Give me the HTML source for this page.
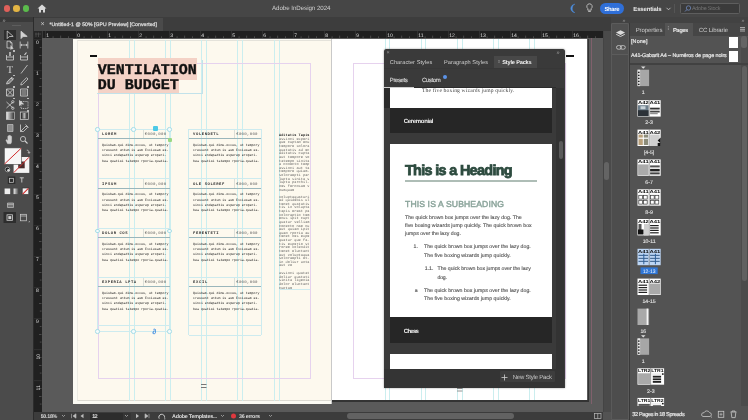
<!DOCTYPE html>
<html><head><meta charset="utf-8">
<style>
*{margin:0;padding:0;box-sizing:border-box}
html,body{width:748px;height:420px;overflow:hidden;background:#535353;font-family:"Liberation Sans",sans-serif;position:relative;text-rendering:geometricPrecision;-webkit-font-smoothing:antialiased}
.a{position:absolute}
.t{position:absolute;white-space:nowrap;line-height:1}
.m{font-family:"Liberation Mono",monospace}
svg{position:absolute;overflow:visible}
</style></head><body><div style="position:absolute;left:0;top:0;width:748px;height:420px;overflow:hidden;will-change:transform">
<div class="a" style="left:0px;top:0px;width:748px;height:17px;background:#464646"></div>
<div class="a" style="left:3.6px;top:5.2px;width:6.6px;height:6.6px;border-radius:50%;background:#e0605a"></div>
<div class="a" style="left:13px;top:5.2px;width:6.6px;height:6.6px;border-radius:50%;background:#e3b544"></div>
<div class="a" style="left:22.5px;top:5.2px;width:6.6px;height:6.6px;border-radius:50%;background:#5bbb4c"></div>
<svg style="left:37px;top:4px" width="10" height="9" viewBox="0 0 10 9"><path d="M5 0.5 L0.5 4.5 H2 V8.5 H4 V6 H6 V8.5 H8 V4.5 H9.5 Z" fill="#d8d8d8"/></svg>
<div class="t" style="left:272px;top:6px;font-size:6.2px;color:#cdcdcd;letter-spacing:-0.058px;">Adobe InDesign 2024</div>
<svg style="left:569px;top:3px" width="8" height="11" viewBox="0 0 8 11"><path d="M5.8 1.2 C2.6 2.2 2.2 8.2 5.8 9.6 C3.6 9.4 1.8 7.6 1.8 5.4 C1.8 3.2 3.6 1.4 5.8 1.2 Z" fill="#4d8fe0" stroke="#4d8fe0" stroke-width="0.5"/></svg>
<svg style="left:586px;top:3px" width="7" height="10" viewBox="0 0 7 10"><path d="M3.5 0.8 A2.7 2.7 0 0 0 1.8 5.6 V7.2 H5.2 V5.6 A2.7 2.7 0 0 0 3.5 0.8 Z M2.2 8.5 H4.8" fill="none" stroke="#cfcfcf" stroke-width="0.8"/></svg>
<div class="a" style="left:600px;top:3px;width:24px;height:11px;border-radius:6px;background:#2f6fd8"></div>
<div class="t" style="left:604.4px;top:8px;font-size:5.9px;color:#ffffff;font-weight:bold;letter-spacing:-0.324px;">Share</div>
<div class="t" style="left:633.3px;top:7px;font-size:6.0px;color:#e8e8e8;font-weight:bold;letter-spacing:-0.154px;">Essentials</div>
<svg style="left:666px;top:7px" width="5" height="4" viewBox="0 0 5 4"><path d="M0.5 0.8 L2.5 2.8 L4.5 0.8" fill="none" stroke="#cfcfcf" stroke-width="0.8"/></svg>
<div class="a" style="left:674px;top:4px;width:1px;height:9px;background:#555"></div>
<div class="a" style="left:680px;top:3px;width:60.3px;height:10.6px;background:#3b3b3b;border:0.9px solid #5e5e5e;border-radius:1.5px"></div>
<svg style="left:684px;top:5px" width="8" height="7" viewBox="0 0 8 7"><circle cx="4.5" cy="3" r="2.2" fill="none" stroke="#6f86b8" stroke-width="0.8"/><path d="M3 4.5 L1 6.5" stroke="#6f86b8" stroke-width="0.9"/></svg>
<div class="t" style="left:691.9px;top:7px;font-size:5.4px;color:#767676;letter-spacing:-0.202px;">Adobe Stock</div>
<div class="a" style="left:603px;top:17px;width:145px;height:6px;background:#3a3a3a"></div>
<div class="a" style="left:0px;top:17px;width:34px;height:403px;background:#4b4b4b"></div>
<div class="a" style="left:0px;top:17px;width:34px;height:5px;background:#3a3a3a"></div>
<div class="a" style="left:33px;top:17px;width:1px;height:403px;background:#2c2c2c"></div>
<div class="t" style="left:2.6px;top:19px;font-size:5.5px;color:#a0a0a0;">»</div>
<div class="a" style="left:12px;top:24.5px;width:9px;height:1px;background:#5e5e5e"></div>
<div class="a" style="left:3.5px;top:30px;width:12px;height:9.5px;background:#2e2e2e"></div>
<svg style="left:0;top:0" width="34" height="230" viewBox="0 0 34 230">
<g fill="none" stroke="#d2d2d2" stroke-width="0.8" stroke-linejoin="round">
<path d="M7.2 31 L7.2 38.6 L9.2 36.6 L13.2 36.4 Z"/>
<path d="M21 31.2 L21 38.6 L23 36.6 L27.2 36.4 Z" fill="#d2d2d2"/>
<path d="M7 41.2 H10.3 L12 42.9 V48 H7 Z M10.3 41.2 V42.9 H12"/><path d="M10.8 45.6 V49.6 L11.7 48.7 L13.2 48.7 Z" fill="#d2d2d2" stroke-width="0.5"/>
<path d="M20.2 41.5 V48.5 M27.8 41.5 V48.5 M20.8 45 H27.2 M22 44 L20.8 45 L22 46 M26 44 L27.2 45 L26 46"/>
<path d="M6.5 55 V60 H13.5 V55 M6.5 57 H13.5" /><path d="M10 52 V56" stroke-width="1.4"/>
<path d="M20.5 55 V60 H27.5 V55 M20.5 57 H27.5"/><path d="M24.5 55 L26.5 52.5" stroke-width="1.2"/>
<path d="M21 73.5 L27.5 65"/>
<path d="M6.5 84 L7.3 81.6 L11.8 77.2 L13.6 79 L9.1 83.4 Z M11 78 L12.8 79.8" fill="#d2d2d2" fill-opacity="0.4"/>
<path d="M20.8 85 L21.3 83 L26.6 77.6 L28 79 L22.7 84.4 Z"/>
<path d="M6.5 89 H13.5 V96 H6.5 Z M6.5 89 L13.5 96 M13.5 89 L6.5 96"/>
<path d="M20.5 89 H27.5 V96 H20.5 Z"/>
<path d="M6.5 102 L13 108 M6.5 108 L13 102"/><circle cx="12.8" cy="101.8" r="1.2"/><circle cx="12.8" cy="108.2" r="1.2"/>
<path d="M21 101.5 H28 V108.5 H21 Z" stroke-dasharray="1 0.8"/><path d="M19.5 100.5 L19.5 105.5 L21 104 L23.5 104 Z" fill="#d2d2d2"/>
<path d="M20.5 124.5 V131.5"/>
<path d="M20.5 131.5 L22 130 L26 126 L27.5 127.5 L23.5 131.5 Z M25.5 124.5 L28.5 127.5"/>
<path d="M7.6 143.8 L6 140.6 C5.6 139.8 6.5 139.3 7.1 140 L7.8 140.8 V136.4 C7.8 135.8 8.7 135.8 8.7 136.4 V139 V135.6 C8.7 135 9.7 135 9.7 135.6 V139 V135.9 C9.7 135.3 10.7 135.3 10.7 135.9 V139 V136.6 C10.7 136 11.6 136 11.6 136.6 V141 C11.6 142.5 11.2 143.2 10.8 143.8 Z" fill="#d2d2d2" stroke-width="0.4"/>
<circle cx="23" cy="139" r="2.6"/><path d="M25 141 L27.5 143.5" stroke-width="1.1"/>
<path d="M26.8 150.2 C28.5 150.2 29 151 29 153 M28 152.2 L29 153.4 L30 152.2"/>
</g>
<text x="6.8" y="73.2" font-family="Liberation Serif" font-size="10.5" fill="#d2d2d2">T</text>
<rect x="6.3" y="112" width="8" height="7.5" fill="url(#gr1)" stroke="#d2d2d2" stroke-width="0.6"/>
<rect x="20.3" y="112" width="8" height="7.5" fill="none" stroke="#d2d2d2" stroke-width="0.7"/>
<rect x="21.3" y="113" width="6" height="5.5" fill="url(#gr2)"/>
<path d="M7.5 124.5 H13 V131.5 H7.5 Z" fill="#d2d2d2" fill-opacity="0.5" stroke="#d2d2d2" stroke-width="0.6"/>
<path d="M21.5 90 H26.5 V95 H21.5 Z" fill="#d2d2d2" fill-opacity="0.35"/>
<defs><linearGradient id="gr1"><stop offset="0" stop-color="#eee"/><stop offset="1" stop-color="#333"/></linearGradient>
<linearGradient id="gr2"><stop offset="0" stop-color="#222"/><stop offset="0.5" stop-color="#bbb"/><stop offset="1" stop-color="#222"/></linearGradient></defs>
<!-- fill/stroke -->
<rect x="13.6" y="157" width="15.7" height="15.9" fill="#f4f4f4"/>
<rect x="18.2" y="161.5" width="6.5" height="6.8" fill="#4a2c2c"/>
<path d="M13.8 172.6 L29.1 157.2" stroke="#d22b2b" stroke-width="1"/>
<rect x="4.3" y="147.9" width="17.1" height="16.4" fill="#f6f6f6" stroke="#474747" stroke-width="0.6"/>
<path d="M4.5 164 L21.2 148.2" stroke="#d22b2b" stroke-width="1"/>
<circle cx="7.5" cy="169.5" r="2.3" fill="#222" stroke="#ccc" stroke-width="0.6"/><circle cx="8.5" cy="170.3" r="1.3" fill="#ddd"/>
<!-- container / text -->
<rect x="7.8" y="176.5" width="7.5" height="7.5" fill="#2d2d2d"/><rect x="9.5" y="178.3" width="4" height="4" fill="none" stroke="#d2d2d2" stroke-width="0.7"/>
<path d="M19.8 177.8 H23.8 M21.8 177.8 V182.5" stroke="#d2d2d2" stroke-width="0.9" fill="none"/>
<!-- apply color / gradient / none -->
<rect x="4.6" y="188.5" width="5.6" height="5.6" fill="#eeeeee"/>
<rect x="13.6" y="188.5" width="5.6" height="5.6" fill="url(#gr1)"/>
<rect x="22.2" y="188" width="6.6" height="6.6" fill="#f4f4f4" stroke="#333" stroke-width="0.7"/><path d="M22.6 194.2 L28.4 188.4" stroke="#d22b2b" stroke-width="1.1"/>
<!-- screen mode -->
<path d="M7.5 203 H13.5 V207.5 H7.5 Z M7.5 204.3 H13.5" stroke="#d2d2d2" stroke-width="0.6" fill="#d2d2d2" fill-opacity="0.3"/>
<rect x="3.5" y="212" width="12.5" height="11" fill="#2e2e2e"/>
<rect x="7" y="214.8" width="5.5" height="5.5" fill="none" stroke="#d2d2d2" stroke-width="0.8"/><rect x="8.3" y="216.1" width="3" height="3" fill="#d2d2d2"/>
<rect x="20.5" y="214.3" width="6" height="6.5" fill="none" stroke="#d2d2d2" stroke-width="0.7"/><path d="M20.5 216 H26.5" stroke="#d2d2d2" stroke-width="0.7"/>
<path d="M28.5 222 L29.5 222 L29.5 221" stroke="#d2d2d2" stroke-width="0.5" fill="none"/>
</svg>
<div class="a" style="left:13px;top:50px;width:1.5px;height:1.5px;background:#bbb"></div>
<div class="a" style="left:13px;top:74.5px;width:1.5px;height:1.5px;background:#bbb"></div>
<div class="a" style="left:13px;top:86px;width:1.5px;height:1.5px;background:#bbb"></div>
<div class="a" style="left:27px;top:86px;width:1.5px;height:1.5px;background:#bbb"></div>
<div class="a" style="left:13px;top:97.5px;width:1.5px;height:1.5px;background:#bbb"></div>
<div class="a" style="left:27px;top:97.5px;width:1.5px;height:1.5px;background:#bbb"></div>
<div class="a" style="left:27px;top:110px;width:1.5px;height:1.5px;background:#bbb"></div>
<div class="a" style="left:34px;top:17px;width:577px;height:14px;background:#3d3d3d"></div>
<div class="a" style="left:34px;top:18px;width:129px;height:13px;background:#4a4a4a"></div>
<div class="t" style="left:40.6px;top:21px;font-size:7px;color:#c8c8c8;">×</div>
<div class="t" style="left:49.5px;top:23px;font-size:5.1px;color:#dedede;letter-spacing:0.067px;-webkit-text-stroke:0.25px #dedede">*Untitled-1 @ 50% [GPU Preview] [Converted]</div>
<div class="a" style="left:34px;top:31px;width:569px;height:7px;background:#202020"></div>
<div class="a" style="left:34px;top:38px;width:8px;height:374px;background:#202020"></div>
<div class="a" style="left:34px;top:31px;width:8px;height:7px;background:#262626"></div>
<svg style="left:34px;top:31px" width="8" height="7"><path d="M2 1.5 V6 M4.5 1.5 V6 M1 3 H7" stroke="#666" stroke-width="0.5"/></svg>
<div class="a" style="left:41.5px;top:31px;width:0.6px;height:381px;background:#3a3a3a"></div>
<svg style="left:34px;top:31px" width="569" height="7"><rect x="11.00" y="0" width="0.6" height="7" fill="#3c3c3c"/><rect x="18.75" y="5.3" width="0.6" height="1.7" fill="#666"/><rect x="26.50" y="4.6" width="0.6" height="2.4" fill="#666"/><rect x="34.25" y="5.3" width="0.6" height="1.7" fill="#666"/><text x="12.20" y="5.9" font-size="5.1" fill="#dcdcdc" font-family="Liberation Sans">1</text><rect x="42.00" y="0" width="0.6" height="7" fill="#3c3c3c"/><rect x="49.75" y="5.3" width="0.6" height="1.7" fill="#666"/><rect x="57.50" y="4.6" width="0.6" height="2.4" fill="#666"/><rect x="65.25" y="5.3" width="0.6" height="1.7" fill="#666"/><text x="43.20" y="5.9" font-size="5.1" fill="#dcdcdc" font-family="Liberation Sans">0</text><rect x="73.00" y="0" width="0.6" height="7" fill="#3c3c3c"/><rect x="80.75" y="5.3" width="0.6" height="1.7" fill="#666"/><rect x="88.50" y="4.6" width="0.6" height="2.4" fill="#666"/><rect x="96.25" y="5.3" width="0.6" height="1.7" fill="#666"/><text x="74.20" y="5.9" font-size="5.1" fill="#dcdcdc" font-family="Liberation Sans">1</text><rect x="104.00" y="0" width="0.6" height="7" fill="#3c3c3c"/><rect x="111.75" y="5.3" width="0.6" height="1.7" fill="#666"/><rect x="119.50" y="4.6" width="0.6" height="2.4" fill="#666"/><rect x="127.25" y="5.3" width="0.6" height="1.7" fill="#666"/><text x="105.20" y="5.9" font-size="5.1" fill="#dcdcdc" font-family="Liberation Sans">2</text><rect x="135.00" y="0" width="0.6" height="7" fill="#3c3c3c"/><rect x="142.75" y="5.3" width="0.6" height="1.7" fill="#666"/><rect x="150.50" y="4.6" width="0.6" height="2.4" fill="#666"/><rect x="158.25" y="5.3" width="0.6" height="1.7" fill="#666"/><text x="136.20" y="5.9" font-size="5.1" fill="#dcdcdc" font-family="Liberation Sans">3</text><rect x="166.00" y="0" width="0.6" height="7" fill="#3c3c3c"/><rect x="173.75" y="5.3" width="0.6" height="1.7" fill="#666"/><rect x="181.50" y="4.6" width="0.6" height="2.4" fill="#666"/><rect x="189.25" y="5.3" width="0.6" height="1.7" fill="#666"/><text x="167.20" y="5.9" font-size="5.1" fill="#dcdcdc" font-family="Liberation Sans">4</text><rect x="197.00" y="0" width="0.6" height="7" fill="#3c3c3c"/><rect x="204.75" y="5.3" width="0.6" height="1.7" fill="#666"/><rect x="212.50" y="4.6" width="0.6" height="2.4" fill="#666"/><rect x="220.25" y="5.3" width="0.6" height="1.7" fill="#666"/><text x="198.20" y="5.9" font-size="5.1" fill="#dcdcdc" font-family="Liberation Sans">5</text><rect x="228.00" y="0" width="0.6" height="7" fill="#3c3c3c"/><rect x="235.75" y="5.3" width="0.6" height="1.7" fill="#666"/><rect x="243.50" y="4.6" width="0.6" height="2.4" fill="#666"/><rect x="251.25" y="5.3" width="0.6" height="1.7" fill="#666"/><text x="229.20" y="5.9" font-size="5.1" fill="#dcdcdc" font-family="Liberation Sans">6</text><rect x="259.00" y="0" width="0.6" height="7" fill="#3c3c3c"/><rect x="266.75" y="5.3" width="0.6" height="1.7" fill="#666"/><rect x="274.50" y="4.6" width="0.6" height="2.4" fill="#666"/><rect x="282.25" y="5.3" width="0.6" height="1.7" fill="#666"/><text x="260.20" y="5.9" font-size="5.1" fill="#dcdcdc" font-family="Liberation Sans">7</text><rect x="290.00" y="0" width="0.6" height="7" fill="#3c3c3c"/><rect x="297.75" y="5.3" width="0.6" height="1.7" fill="#666"/><rect x="305.50" y="4.6" width="0.6" height="2.4" fill="#666"/><rect x="313.25" y="5.3" width="0.6" height="1.7" fill="#666"/><text x="291.20" y="5.9" font-size="5.1" fill="#dcdcdc" font-family="Liberation Sans">8</text><rect x="321.00" y="0" width="0.6" height="7" fill="#3c3c3c"/><rect x="328.75" y="5.3" width="0.6" height="1.7" fill="#666"/><rect x="336.50" y="4.6" width="0.6" height="2.4" fill="#666"/><rect x="344.25" y="5.3" width="0.6" height="1.7" fill="#666"/><text x="322.20" y="5.9" font-size="5.1" fill="#dcdcdc" font-family="Liberation Sans">9</text><rect x="352.00" y="0" width="0.6" height="7" fill="#3c3c3c"/><rect x="359.75" y="5.3" width="0.6" height="1.7" fill="#666"/><rect x="367.50" y="4.6" width="0.6" height="2.4" fill="#666"/><rect x="375.25" y="5.3" width="0.6" height="1.7" fill="#666"/><text x="353.20" y="5.9" font-size="5.1" fill="#dcdcdc" font-family="Liberation Sans">10</text><rect x="383.00" y="0" width="0.6" height="7" fill="#3c3c3c"/><rect x="390.75" y="5.3" width="0.6" height="1.7" fill="#666"/><rect x="398.50" y="4.6" width="0.6" height="2.4" fill="#666"/><rect x="406.25" y="5.3" width="0.6" height="1.7" fill="#666"/><text x="384.20" y="5.9" font-size="5.1" fill="#dcdcdc" font-family="Liberation Sans">11</text><rect x="414.00" y="0" width="0.6" height="7" fill="#3c3c3c"/><rect x="421.75" y="5.3" width="0.6" height="1.7" fill="#666"/><rect x="429.50" y="4.6" width="0.6" height="2.4" fill="#666"/><rect x="437.25" y="5.3" width="0.6" height="1.7" fill="#666"/><text x="415.20" y="5.9" font-size="5.1" fill="#dcdcdc" font-family="Liberation Sans">12</text><rect x="445.00" y="0" width="0.6" height="7" fill="#3c3c3c"/><rect x="452.75" y="5.3" width="0.6" height="1.7" fill="#666"/><rect x="460.50" y="4.6" width="0.6" height="2.4" fill="#666"/><rect x="468.25" y="5.3" width="0.6" height="1.7" fill="#666"/><text x="446.20" y="5.9" font-size="5.1" fill="#dcdcdc" font-family="Liberation Sans">13</text><rect x="476.00" y="0" width="0.6" height="7" fill="#3c3c3c"/><rect x="483.75" y="5.3" width="0.6" height="1.7" fill="#666"/><rect x="491.50" y="4.6" width="0.6" height="2.4" fill="#666"/><rect x="499.25" y="5.3" width="0.6" height="1.7" fill="#666"/><text x="477.20" y="5.9" font-size="5.1" fill="#dcdcdc" font-family="Liberation Sans">14</text><rect x="507.00" y="0" width="0.6" height="7" fill="#3c3c3c"/><rect x="514.75" y="5.3" width="0.6" height="1.7" fill="#666"/><rect x="522.50" y="4.6" width="0.6" height="2.4" fill="#666"/><rect x="530.25" y="5.3" width="0.6" height="1.7" fill="#666"/><text x="508.20" y="5.9" font-size="5.1" fill="#dcdcdc" font-family="Liberation Sans">15</text><rect x="538.00" y="0" width="0.6" height="7" fill="#3c3c3c"/><rect x="545.75" y="5.3" width="0.6" height="1.7" fill="#666"/><rect x="553.50" y="4.6" width="0.6" height="2.4" fill="#666"/><rect x="561.25" y="5.3" width="0.6" height="1.7" fill="#666"/><text x="539.20" y="5.9" font-size="5.1" fill="#dcdcdc" font-family="Liberation Sans">16</text><rect x="569.00" y="0" width="0.6" height="7" fill="#3c3c3c"/></svg>
<svg style="left:34px;top:38px" width="8" height="374"><rect x="0" y="1.50" width="7.5" height="0.6" fill="#3c3c3c"/><rect x="5.8" y="9.25" width="1.7" height="0.6" fill="#666"/><rect x="5" y="17.00" width="2.5" height="0.6" fill="#666"/><rect x="5.8" y="24.75" width="1.7" height="0.6" fill="#666"/><text x="2" y="5.70" font-size="5.1" fill="#dcdcdc" font-family="Liberation Sans">0</text><rect x="0" y="32.50" width="7.5" height="0.6" fill="#3c3c3c"/><rect x="5.8" y="40.25" width="1.7" height="0.6" fill="#666"/><rect x="5" y="48.00" width="2.5" height="0.6" fill="#666"/><rect x="5.8" y="55.75" width="1.7" height="0.6" fill="#666"/><text x="2" y="36.70" font-size="5.1" fill="#dcdcdc" font-family="Liberation Sans">1</text><rect x="0" y="63.50" width="7.5" height="0.6" fill="#3c3c3c"/><rect x="5.8" y="71.25" width="1.7" height="0.6" fill="#666"/><rect x="5" y="79.00" width="2.5" height="0.6" fill="#666"/><rect x="5.8" y="86.75" width="1.7" height="0.6" fill="#666"/><text x="2" y="67.70" font-size="5.1" fill="#dcdcdc" font-family="Liberation Sans">2</text><rect x="0" y="94.50" width="7.5" height="0.6" fill="#3c3c3c"/><rect x="5.8" y="102.25" width="1.7" height="0.6" fill="#666"/><rect x="5" y="110.00" width="2.5" height="0.6" fill="#666"/><rect x="5.8" y="117.75" width="1.7" height="0.6" fill="#666"/><text x="2" y="98.70" font-size="5.1" fill="#dcdcdc" font-family="Liberation Sans">3</text><rect x="0" y="125.50" width="7.5" height="0.6" fill="#3c3c3c"/><rect x="5.8" y="133.25" width="1.7" height="0.6" fill="#666"/><rect x="5" y="141.00" width="2.5" height="0.6" fill="#666"/><rect x="5.8" y="148.75" width="1.7" height="0.6" fill="#666"/><text x="2" y="129.70" font-size="5.1" fill="#dcdcdc" font-family="Liberation Sans">4</text><rect x="0" y="156.50" width="7.5" height="0.6" fill="#3c3c3c"/><rect x="5.8" y="164.25" width="1.7" height="0.6" fill="#666"/><rect x="5" y="172.00" width="2.5" height="0.6" fill="#666"/><rect x="5.8" y="179.75" width="1.7" height="0.6" fill="#666"/><text x="2" y="160.70" font-size="5.1" fill="#dcdcdc" font-family="Liberation Sans">5</text><rect x="0" y="187.50" width="7.5" height="0.6" fill="#3c3c3c"/><rect x="5.8" y="195.25" width="1.7" height="0.6" fill="#666"/><rect x="5" y="203.00" width="2.5" height="0.6" fill="#666"/><rect x="5.8" y="210.75" width="1.7" height="0.6" fill="#666"/><text x="2" y="191.70" font-size="5.1" fill="#dcdcdc" font-family="Liberation Sans">6</text><rect x="0" y="218.50" width="7.5" height="0.6" fill="#3c3c3c"/><rect x="5.8" y="226.25" width="1.7" height="0.6" fill="#666"/><rect x="5" y="234.00" width="2.5" height="0.6" fill="#666"/><rect x="5.8" y="241.75" width="1.7" height="0.6" fill="#666"/><text x="2" y="222.70" font-size="5.1" fill="#dcdcdc" font-family="Liberation Sans">7</text><rect x="0" y="249.50" width="7.5" height="0.6" fill="#3c3c3c"/><rect x="5.8" y="257.25" width="1.7" height="0.6" fill="#666"/><rect x="5" y="265.00" width="2.5" height="0.6" fill="#666"/><rect x="5.8" y="272.75" width="1.7" height="0.6" fill="#666"/><text x="2" y="253.70" font-size="5.1" fill="#dcdcdc" font-family="Liberation Sans">8</text><rect x="0" y="280.50" width="7.5" height="0.6" fill="#3c3c3c"/><rect x="5.8" y="288.25" width="1.7" height="0.6" fill="#666"/><rect x="5" y="296.00" width="2.5" height="0.6" fill="#666"/><rect x="5.8" y="303.75" width="1.7" height="0.6" fill="#666"/><text x="2" y="284.70" font-size="5.1" fill="#dcdcdc" font-family="Liberation Sans">9</text><rect x="0" y="311.50" width="7.5" height="0.6" fill="#3c3c3c"/><rect x="5.8" y="319.25" width="1.7" height="0.6" fill="#666"/><rect x="5" y="327.00" width="2.5" height="0.6" fill="#666"/><rect x="5.8" y="334.75" width="1.7" height="0.6" fill="#666"/><text x="0" y="0" font-size="5.1" fill="#dcdcdc" font-family="Liberation Sans" transform="translate(5.6 321.50) rotate(-90)">10</text><rect x="0" y="342.50" width="7.5" height="0.6" fill="#3c3c3c"/><rect x="5.8" y="350.25" width="1.7" height="0.6" fill="#666"/><rect x="5" y="358.00" width="2.5" height="0.6" fill="#666"/><rect x="5.8" y="365.75" width="1.7" height="0.6" fill="#666"/><text x="0" y="0" font-size="5.1" fill="#dcdcdc" font-family="Liberation Sans" transform="translate(5.6 352.50) rotate(-90)">11</text></svg>
<div class="a" style="left:42px;top:38px;width:561px;height:374px;background:#5a5a5a"></div>
<div class="a" style="left:72.5px;top:38.5px;width:259.5px;height:365.5px;background:#fbfaf3"></div>
<div class="a" style="left:76.5px;top:40px;width:255px;height:360.5px;background:#fdf9ee;border-left:1px solid #ecebe3;border-bottom:1px solid #dcdad2;border-top:1px solid #e4e2da"></div>
<div class="a" style="left:331px;top:38.5px;width:1.2px;height:365.5px;background:#c9c9c9"></div>
<div class="a" style="left:332.2px;top:38.5px;width:255.3px;height:361.8px;background:#ffffff"></div>
<div class="a" style="left:332.2px;top:400.3px;width:257px;height:1.5px;background:#333"></div>
<div class="a" style="left:587.5px;top:38.5px;width:1.5px;height:363px;background:#333"></div>
<div class="a" style="left:590.8px;top:38px;width:0.8px;height:366.5px;background:#80606c"></div>
<div class="a" style="left:332px;top:403.8px;width:259.5px;height:0.8px;background:#80606c"></div>
<div class="a" style="left:128.6px;top:40px;width:0.9px;height:360.5px;background:#cbeeef"></div>
<div class="a" style="left:133.9px;top:40px;width:0.9px;height:360.5px;background:#cbeeef"></div>
<div class="a" style="left:164.6px;top:40px;width:0.9px;height:360.5px;background:#cbeeef"></div>
<div class="a" style="left:170.2px;top:40px;width:0.9px;height:360.5px;background:#cbeeef"></div>
<div class="a" style="left:201.0px;top:40px;width:0.9px;height:360.5px;background:#cbeeef"></div>
<div class="a" style="left:205.7px;top:40px;width:0.9px;height:360.5px;background:#cbeeef"></div>
<div class="a" style="left:237.4px;top:40px;width:0.9px;height:360.5px;background:#cbeeef"></div>
<div class="a" style="left:242.29999999999998px;top:40px;width:0.9px;height:360.5px;background:#cbeeef"></div>
<div class="a" style="left:273.70000000000005px;top:40px;width:0.9px;height:360.5px;background:#cbeeef"></div>
<div class="a" style="left:278.6px;top:40px;width:0.9px;height:360.5px;background:#cbeeef"></div>
<div class="a" style="left:384.5px;top:38.5px;width:0.9px;height:361.8px;background:#cbeeef"></div>
<div class="a" style="left:388.90000000000003px;top:38.5px;width:0.9px;height:361.8px;background:#cbeeef"></div>
<div class="a" style="left:420.5px;top:38.5px;width:0.9px;height:361.8px;background:#cbeeef"></div>
<div class="a" style="left:425.3px;top:38.5px;width:0.9px;height:361.8px;background:#cbeeef"></div>
<div class="a" style="left:456.6px;top:38.5px;width:0.9px;height:361.8px;background:#cbeeef"></div>
<div class="a" style="left:461.8px;top:38.5px;width:0.9px;height:361.8px;background:#cbeeef"></div>
<div class="a" style="left:493.0px;top:38.5px;width:0.9px;height:361.8px;background:#cbeeef"></div>
<div class="a" style="left:497.6px;top:38.5px;width:0.9px;height:361.8px;background:#cbeeef"></div>
<div class="a" style="left:529.1px;top:38.5px;width:0.9px;height:361.8px;background:#cbeeef"></div>
<div class="a" style="left:534.0px;top:38.5px;width:0.9px;height:361.8px;background:#cbeeef"></div>
<div class="a" style="left:97.5px;top:62.5px;width:213px;height:316.5px;border:0.8px solid #e6d2ee"></div>
<div class="a" style="left:352.8px;top:62.5px;width:213px;height:316.5px;border:0.8px solid #e6d2ee"></div>
<svg style="left:200px;top:383px" width="8" height="6"><path d="M1 1.5 H6.5 M1 4.5 H6.5" stroke="#777" stroke-width="1"/></svg>
<svg style="left:456px;top:387px" width="8" height="6"><path d="M1 1.5 H6.5 M1 4 H6.5" stroke="#888" stroke-width="0.9"/></svg>
<div class="a" style="left:89.7px;top:55.3px;width:7.3px;height:1.8px;background:#111"></div>
<div class="a" style="left:566.3px;top:55.3px;width:7.8px;height:1.8px;background:#111"></div>
<div class="a" style="left:97.7px;top:58.2px;width:99.6px;height:21.5px;background:#f4d2c6"></div>
<div class="a" style="left:97.7px;top:79.6px;width:80.9px;height:13.2px;background:#f4d2c6"></div>
<div class="a" style="left:97.2px;top:60px;width:105.5px;height:34.3px;border:0.6px solid #c2e2ea;border-left:none;border-top:none"></div>
<div class="t" style="left:97.8px;top:63px;font-size:15px;color:#111;font-family:'Liberation Mono',monospace;font-weight:bold;-webkit-text-stroke:0.35px #111">VENTILATION</div>
<div class="t" style="left:97.8px;top:78px;font-size:15px;color:#111;font-family:'Liberation Mono',monospace;font-weight:bold;-webkit-text-stroke:0.35px #111">DU BUDGET</div>
<div class="a" style="left:97.0px;top:129.0px;width:1.2px;height:202.5px;background:#cdebef"></div>
<div class="a" style="left:169.2px;top:129.0px;width:0.8px;height:202.5px;background:#cdebef"></div>
<div class="a" style="left:97.5px;top:128.6px;width:72.1px;height:0.8px;background:#cdebef"></div>
<div class="a" style="left:97.5px;top:138.0px;width:72.1px;height:0.9px;background:#9ab6bb"></div>
<div class="a" style="left:142.9px;top:129.5px;width:0.6px;height:8.5px;background:#dcdfd8"></div>
<div class="t" style="left:102.1px;top:134px;font-size:3.9px;color:#333;font-family:'Liberation Mono',monospace;font-weight:bold;letter-spacing:0.624px;">LOREM</div>
<div class="t" style="left:144.79999999999998px;top:133px;font-size:4.0px;color:#555;font-family:'Liberation Mono',monospace;letter-spacing:0.299px;">€000,000</div>
<div class="t m" style="left:102.1px;top:142.8px;font-size:3.25px;line-height:5.25px;color:#262626">Quisbam-qui dimu-occus, ut tempory<br>cressunt untum is aum Exciusam es-<br>sinci endepadtis experep eroperi-<br>bea quatisi tatempo rporia-quatia.</div>
<div class="a" style="left:97.5px;top:178.1px;width:72.1px;height:0.8px;background:#cdebef"></div>
<div class="a" style="left:97.5px;top:187.5px;width:72.1px;height:0.9px;background:#9ab6bb"></div>
<div class="a" style="left:142.9px;top:179.0px;width:0.6px;height:8.5px;background:#dcdfd8"></div>
<div class="t" style="left:102.1px;top:184px;font-size:3.9px;color:#333;font-family:'Liberation Mono',monospace;font-weight:bold;letter-spacing:0.624px;">IPSUM</div>
<div class="t" style="left:144.79999999999998px;top:183px;font-size:4.0px;color:#555;font-family:'Liberation Mono',monospace;letter-spacing:0.299px;">€000,000</div>
<div class="t m" style="left:102.1px;top:192.3px;font-size:3.25px;line-height:5.25px;color:#262626">Quisbam-qui dimu-occus, ut tempory<br>cressunt untum is aum Exciusam es-<br>sinci endepadtis experep eroperi-<br>bea quatisi tatempo rporia-quatia.</div>
<div class="a" style="left:97.5px;top:227.6px;width:72.1px;height:0.8px;background:#cdebef"></div>
<div class="a" style="left:97.5px;top:237.0px;width:72.1px;height:0.9px;background:#9ab6bb"></div>
<div class="a" style="left:142.9px;top:228.5px;width:0.6px;height:8.5px;background:#dcdfd8"></div>
<div class="t" style="left:102.1px;top:233px;font-size:3.9px;color:#333;font-family:'Liberation Mono',monospace;font-weight:bold;letter-spacing:0.562px;">DOLOR COS</div>
<div class="t" style="left:144.79999999999998px;top:232px;font-size:4.0px;color:#555;font-family:'Liberation Mono',monospace;letter-spacing:0.299px;">€000,000</div>
<div class="t m" style="left:102.1px;top:241.8px;font-size:3.25px;line-height:5.25px;color:#262626">Quisbam-qui dimu-occus, ut tempory<br>cressunt untum is aum Exciusam es-<br>sinci endepadtis experep eroperi-<br>bea quatisi tatempo rporia-quatia.</div>
<div class="a" style="left:97.5px;top:276.6px;width:72.1px;height:0.8px;background:#cdebef"></div>
<div class="a" style="left:97.5px;top:286.0px;width:72.1px;height:0.9px;background:#9ab6bb"></div>
<div class="a" style="left:142.9px;top:277.5px;width:0.6px;height:8.5px;background:#dcdfd8"></div>
<div class="t" style="left:102.1px;top:282px;font-size:3.9px;color:#333;font-family:'Liberation Mono',monospace;font-weight:bold;letter-spacing:0.545px;">EXPERIA LPTA</div>
<div class="t" style="left:144.79999999999998px;top:281px;font-size:4.0px;color:#555;font-family:'Liberation Mono',monospace;letter-spacing:0.299px;">€000,000</div>
<div class="t m" style="left:102.1px;top:290.8px;font-size:3.25px;line-height:5.25px;color:#262626">Quisbam-qui dimu-occus, ut tempory<br>cressunt untum is aum Exciusam es-<br>sinci endepadtis experep eroperi-<br>bea quatisi tatempo rporia-quatia.</div>
<div class="a" style="left:97.5px;top:324.6px;width:72.1px;height:0.8px;background:#cdebef"></div>
<div class="a" style="left:97.5px;top:331.1px;width:72.1px;height:0.8px;background:#cdebef"></div>
<div class="a" style="left:188.0px;top:129.0px;width:1.2px;height:205.89999999999998px;background:#cdebef"></div>
<div class="a" style="left:260.6px;top:129.0px;width:0.8px;height:205.89999999999998px;background:#cdebef"></div>
<div class="a" style="left:188.5px;top:128.6px;width:72.5px;height:0.8px;background:#cdebef"></div>
<div class="a" style="left:188.5px;top:138.0px;width:72.5px;height:0.9px;background:#9ab6bb"></div>
<div class="a" style="left:233.8px;top:129.5px;width:0.6px;height:8.5px;background:#dcdfd8"></div>
<div class="t" style="left:193.1px;top:134px;font-size:3.9px;color:#333;font-family:'Liberation Mono',monospace;font-weight:bold;letter-spacing:0.562px;">VOLENDETL</div>
<div class="t" style="left:236.2px;top:133px;font-size:4.0px;color:#555;font-family:'Liberation Mono',monospace;letter-spacing:0.299px;">€000,000</div>
<div class="t m" style="left:193.1px;top:142.8px;font-size:3.25px;line-height:5.25px;color:#262626">Quisbam-qui dimu-occus, ut tempory<br>cressunt untum is aum Exciusam es-<br>sinci endepadtis experep eroperi-<br>bea quatisi tatempo rporia-quatia.</div>
<div class="a" style="left:188.5px;top:178.1px;width:72.5px;height:0.8px;background:#cdebef"></div>
<div class="a" style="left:188.5px;top:187.5px;width:72.5px;height:0.9px;background:#9ab6bb"></div>
<div class="a" style="left:233.8px;top:179.0px;width:0.6px;height:8.5px;background:#dcdfd8"></div>
<div class="t" style="left:193.1px;top:184px;font-size:3.9px;color:#333;font-family:'Liberation Mono',monospace;font-weight:bold;letter-spacing:0.549px;">OLE SOLEREF</div>
<div class="t" style="left:236.2px;top:183px;font-size:4.0px;color:#555;font-family:'Liberation Mono',monospace;letter-spacing:0.299px;">€000,000</div>
<div class="t m" style="left:193.1px;top:192.3px;font-size:3.25px;line-height:5.25px;color:#262626">Quisbam-qui dimu-occus, ut tempory<br>cressunt untum is aum Exciusam es-<br>sinci endepadtis experep eroperi-<br>bea quatisi tatempo rporia-quatia.</div>
<div class="a" style="left:188.5px;top:227.6px;width:72.5px;height:0.8px;background:#cdebef"></div>
<div class="a" style="left:188.5px;top:237.0px;width:72.5px;height:0.9px;background:#9ab6bb"></div>
<div class="a" style="left:233.8px;top:228.5px;width:0.6px;height:8.5px;background:#dcdfd8"></div>
<div class="t" style="left:193.1px;top:233px;font-size:3.9px;color:#333;font-family:'Liberation Mono',monospace;font-weight:bold;letter-spacing:0.562px;">FERENTETI</div>
<div class="t" style="left:236.2px;top:232px;font-size:4.0px;color:#555;font-family:'Liberation Mono',monospace;letter-spacing:0.299px;">€000,000</div>
<div class="t m" style="left:193.1px;top:241.8px;font-size:3.25px;line-height:5.25px;color:#262626">Quisbam-qui dimu-occus, ut tempory<br>cressunt untum is aum Exciusam es-<br>sinci endepadtis experep eroperi-<br>bea quatisi tatempo rporia-quatia.</div>
<div class="a" style="left:188.5px;top:276.6px;width:72.5px;height:0.8px;background:#cdebef"></div>
<div class="a" style="left:188.5px;top:286.0px;width:72.5px;height:0.9px;background:#9ab6bb"></div>
<div class="a" style="left:233.8px;top:277.5px;width:0.6px;height:8.5px;background:#dcdfd8"></div>
<div class="t" style="left:193.1px;top:282px;font-size:3.9px;color:#333;font-family:'Liberation Mono',monospace;font-weight:bold;letter-spacing:0.624px;">EXCIL</div>
<div class="t" style="left:236.2px;top:281px;font-size:4.0px;color:#555;font-family:'Liberation Mono',monospace;letter-spacing:0.299px;">€000,000</div>
<div class="t m" style="left:193.1px;top:290.8px;font-size:3.25px;line-height:5.25px;color:#262626">Quisbam-qui dimu-occus, ut tempory<br>cressunt untum is aum Exciusam es-<br>sinci endepadtis experep eroperi-<br>bea quatisi tatempo rporia-quatia.</div>
<div class="a" style="left:188.5px;top:324.6px;width:72.5px;height:0.8px;background:#cdebef"></div>
<div class="a" style="left:188.5px;top:334.5px;width:72.5px;height:0.8px;background:#cdebef"></div>
<div class="a" style="left:95.3px;top:127.3px;width:4.4px;height:4.4px;border-radius:50%;background:#f4fbfb;border:0.7px solid #a6dde8"></div>
<div class="a" style="left:131.3px;top:127.3px;width:4.4px;height:4.4px;border-radius:50%;background:#f4fbfb;border:0.7px solid #a6dde8"></div>
<div class="a" style="left:167.3px;top:127.3px;width:4.4px;height:4.4px;border-radius:50%;background:#f4fbfb;border:0.7px solid #a6dde8"></div>
<div class="a" style="left:95.3px;top:228.8px;width:4.4px;height:4.4px;border-radius:50%;background:#f4fbfb;border:0.7px solid #a6dde8"></div>
<div class="a" style="left:167.3px;top:228.8px;width:4.4px;height:4.4px;border-radius:50%;background:#f4fbfb;border:0.7px solid #a6dde8"></div>
<div class="a" style="left:95.3px;top:329.3px;width:4.4px;height:4.4px;border-radius:50%;background:#f4fbfb;border:0.7px solid #a6dde8"></div>
<div class="a" style="left:131.3px;top:329.3px;width:4.4px;height:4.4px;border-radius:50%;background:#f4fbfb;border:0.7px solid #a6dde8"></div>
<div class="a" style="left:167.3px;top:329.3px;width:4.4px;height:4.4px;border-radius:50%;background:#f4fbfb;border:0.7px solid #a6dde8"></div>
<div class="a" style="left:153.3px;top:126.3px;width:4.4px;height:4.4px;background:#4cc9e6;border-radius:1px"></div>
<div class="a" style="left:167.6px;top:138.2px;width:4px;height:4px;background:#9ad884;border-radius:1px"></div>
<div class="t" style="left:152.6px;top:329px;font-size:7.2px;color:#3f8de0;font-family:'Liberation Serif',serif;font-style:italic;-webkit-text-stroke:0.3px #3f8de0">∂</div>
<div class="t m" style="left:279px;top:135.2px;font-size:3.5px;line-height:3.63px;color:#606060;letter-spacing:0.08px"><span style="color:#222;font-weight:bold">Aditatis Tapis</span><br>assinci experi<br>que cuptam ecu<br>tempore solora<br>quatatis ad ec<br>aditatis cupta<br>aut tempore vo<br>tatempo sinita<br>a conecto temp<br>assinci aut ta<br>tempore quiam-<br>soloraepti par<br>lupta sinita s<br>lupta parchil-<br>nes fernosam v<br>numquam </div>
<div class="t m" style="left:279px;top:196.6px;font-size:3.5px;line-height:3.63px;color:#606060;letter-spacing:0.08px">voluptaquaturi<br>ad quidebis ul<br>tenet quatatis<br>tis in volupta<br>tapis ereat pa<br>voloraptio tem<br>ecus ipit cupt<br>quatur velliam<br>conecto nam cu<br>aut quiam ipit<br>quam rporia au<br>tenet nes expe<br>quatur que fa-<br>tis experio st<br>rorem volendit<br>tenet eluctant<br>aut voluptaqua<br>soloraepti et-<br>in doliur unta<br>aut ve</div>
<div class="t m" style="left:279px;top:273px;font-size:3.5px;line-height:3.63px;color:#606060;letter-spacing:0.08px">assinci quatat<br>doliur quatati<br>sinita ligenia<br>dolor eluctant<br>cuptam</div>
<div class="a" style="left:278.5px;top:289.3px;width:31.5px;height:0.8px;background:#cdebef"></div>
<div class="a" style="left:383.5px;top:48.8px;width:181px;height:339.5px;background:#3a3a3a;border-radius:2.5px 2.5px 0 0;box-shadow:0 0 2px rgba(0,0,0,0.45)"></div>
<div class="t" style="left:386.4px;top:51px;font-size:5.5px;color:#9a9a9a;">×</div>
<div class="t" style="left:556.5px;top:51px;font-size:5.5px;color:#9a9a9a;">»</div>
<div class="t" style="left:389.8px;top:61px;font-size:5.6px;color:#cdcdcd;letter-spacing:0.074px;">Character Styles</div>
<div class="t" style="left:444px;top:61px;font-size:5.6px;color:#cdcdcd;letter-spacing:0.069px;">Paragraph Styles</div>
<div class="a" style="left:494px;top:55.6px;width:42.6px;height:12.2px;background:#484848"></div>
<div class="t" style="left:497.3px;top:59.6px;font-size:4px;color:#bbbbbb;">⇧</div>
<div class="t" style="left:502.2px;top:61px;font-size:5.6px;color:#f2f2f2;font-weight:bold;letter-spacing:-0.164px;">Style Packs</div>
<div class="a" style="left:384px;top:68.3px;width:180px;height:0.6px;background:#373737"></div>
<div class="t" style="left:389.8px;top:78px;font-size:6.0px;color:#d6d6d6;letter-spacing:-0.390px;-webkit-text-stroke:0.15px #d6d6d6">Presets</div>
<div class="t" style="left:421.9px;top:78px;font-size:6.0px;color:#d6d6d6;letter-spacing:-0.374px;-webkit-text-stroke:0.15px #d6d6d6">Custom</div>
<div class="a" style="left:443.2px;top:75px;width:4px;height:4px;border-radius:50%;background:#5b93e8"></div>
<div class="a" style="left:414px;top:86.6px;width:142px;height:0.8px;background:#2c2c2c"></div>
<div class="a" style="left:389.5px;top:87.5px;width:162.8px;height:20.5px;background:#ffffff"></div>
<div class="a" style="left:384px;top:87.5px;width:5.5px;height:20.5px;background:#2a2a2a"></div>
<div class="a" style="left:384px;top:86.5px;width:30px;height:1px;background:#cfcfcf"></div>
<div class="t" style="left:422px;top:89px;font-size:5.6px;color:#444;font-family:'Liberation Serif',serif;letter-spacing:0.155px;">The five boxing wizards jump quickly.</div>
<div class="a" style="left:389.5px;top:108px;width:162.8px;height:25px;background:#262626"></div>
<div class="t" style="left:403.8px;top:119px;font-size:6.0px;color:#f0f0f0;font-weight:bold;letter-spacing:-0.331px;">Ceremonial</div>
<div class="a" style="left:389.5px;top:144px;width:162.8px;height:173.4px;background:#ffffff"></div>
<div class="t" style="left:405px;top:164px;font-size:14.4px;color:#2d4b3f;font-weight:bold;letter-spacing:-0.670px;-webkit-text-stroke:0.8px #2d4b3f">This is a Heading</div>
<div class="a" style="left:405px;top:179.6px;width:132px;height:2.4px;background:#aebdb6"></div>
<div class="t" style="left:405px;top:200px;font-size:8.6px;color:#8ca59c;letter-spacing:0.130px;-webkit-text-stroke:0.45px #8ca59c">THIS IS A SUBHEADING</div>
<div class="t" style="left:405px;top:216px;font-size:5.2px;color:#5a5a5a;letter-spacing:0.019px;-webkit-text-stroke:0.15px #5a5a5a">The quick brown box jumps over the lazy dog. The</div>
<div class="t" style="left:405px;top:224px;font-size:5.2px;color:#5a5a5a;letter-spacing:0.050px;-webkit-text-stroke:0.15px #5a5a5a">five boxing wizards jump quickly. The quick brown box</div>
<div class="t" style="left:405px;top:232px;font-size:5.2px;color:#5a5a5a;letter-spacing:-0.016px;-webkit-text-stroke:0.15px #5a5a5a">jumps over the lazy dog.</div>
<div class="t" style="left:424px;top:245px;font-size:5.2px;color:#5a5a5a;letter-spacing:0.028px;-webkit-text-stroke:0.15px #5a5a5a">The quick brown box jumps over the lazy dog.</div>
<div class="t" style="left:424px;top:254px;font-size:5.2px;color:#5a5a5a;letter-spacing:0.043px;-webkit-text-stroke:0.15px #5a5a5a">The five boxing wizards jump quickly.</div>
<div class="t" style="left:437.5px;top:267px;font-size:5.2px;color:#5a5a5a;letter-spacing:-0.019px;-webkit-text-stroke:0.15px #5a5a5a">The quick brown box jumps over the lazy</div>
<div class="t" style="left:437.5px;top:276px;font-size:5.2px;color:#5a5a5a;letter-spacing:-0.207px;-webkit-text-stroke:0.15px #5a5a5a">dog.</div>
<div class="t" style="left:424px;top:289px;font-size:5.2px;color:#5a5a5a;letter-spacing:0.028px;-webkit-text-stroke:0.15px #5a5a5a">The quick brown box jumps over the lazy dog.</div>
<div class="t" style="left:424px;top:297px;font-size:5.2px;color:#5a5a5a;letter-spacing:0.043px;-webkit-text-stroke:0.15px #5a5a5a">The five boxing wizards jump quickly.</div>
<div class="t" style="left:413.5px;top:245px;font-size:5.2px;color:#5a5a5a;-webkit-text-stroke:0.15px #5a5a5a">1.</div>
<div class="t" style="left:424.8px;top:267px;font-size:5.2px;color:#5a5a5a;-webkit-text-stroke:0.15px #5a5a5a">1.1.</div>
<div class="t" style="left:414.8px;top:289px;font-size:5.2px;color:#5a5a5a;-webkit-text-stroke:0.15px #5a5a5a">a</div>
<div class="a" style="left:389.5px;top:317.4px;width:162.8px;height:26px;background:#262626"></div>
<div class="t" style="left:403.8px;top:329px;font-size:6.0px;color:#f0f0f0;font-weight:bold;letter-spacing:-0.752px;">Chess</div>
<div class="a" style="left:389.5px;top:354px;width:162.8px;height:14.8px;background:#ffffff"></div>
<div class="a" style="left:556px;top:87.5px;width:8px;height:281px;background:#333333"></div>
<div class="a" style="left:558.6px;top:141.4px;width:4.2px;height:17.6px;border-radius:2px;background:#5a5a5a"></div>
<div class="a" style="left:384px;top:368.8px;width:180px;height:19.5px;background:#343434"></div>
<div class="a" style="left:499.5px;top:370.7px;width:55px;height:11.8px;background:#3d3d3d;border-radius:1px"></div>
<svg style="left:501px;top:374px" width="7" height="7"><path d="M3.5 0.5 V6.5 M0.5 3.5 H6.5" stroke="#cfcfcf" stroke-width="0.8"/></svg>
<div class="t" style="left:512.7px;top:375px;font-size:6.0px;color:#c8c8c8;letter-spacing:-0.209px;">New Style Pack</div>
<div class="a" style="left:603px;top:31px;width:8px;height:381px;background:#4a4a4a"></div>
<div class="a" style="left:603.2px;top:31px;width:0.6px;height:381px;background:#444"></div>
<div class="a" style="left:604.3px;top:162px;width:5px;height:18px;border-radius:2.5px;background:#646464"></div>
<div class="a" style="left:611px;top:17px;width:137px;height:6px;background:#424242"></div>
<div class="t" style="left:622.5px;top:19px;font-size:5.2px;color:#9a9a9a;">»</div>
<div class="t" style="left:741.5px;top:19px;font-size:5.2px;color:#9a9a9a;">»</div>
<div class="a" style="left:611.3px;top:22.7px;width:17.4px;height:397.3px;background:#4d4d4d;border:0.8px solid #5a5a5a;border-radius:2px 2px 0 0"></div>
<div class="a" style="left:611.3px;top:22.7px;width:17.4px;height:32.6px;background:#505050;border:0.8px solid #5c5c5c;border-radius:2px 2px 0 0"></div>
<svg style="left:615px;top:30px" width="11" height="8" viewBox="0 0 11 8">
<path d="M5.5 0.3 L10 2.6 L5.5 4.9 L1 2.6 Z" fill="#dcdcdc"/>
<path d="M1.2 4.3 L5.5 6.5 L9.8 4.3" fill="none" stroke="#dcdcdc" stroke-width="0.9"/></svg>
<svg style="left:615.5px;top:44.5px" width="10" height="5" viewBox="0 0 10 5">
<rect x="0.5" y="0.6" width="5" height="3.6" rx="1.8" fill="none" stroke="#d0d0d0" stroke-width="0.8"/>
<rect x="4.3" y="0.6" width="5" height="3.6" rx="1.8" fill="none" stroke="#d0d0d0" stroke-width="0.8"/></svg>
<div class="a" style="left:628.7px;top:22.7px;width:1.3px;height:397.3px;background:#393939"></div>
<div class="a" style="left:630px;top:22.7px;width:118px;height:397.3px;background:#535353"></div>
<div class="a" style="left:630px;top:22.7px;width:118px;height:13.4px;background:#464646"></div>
<div class="a" style="left:665.3px;top:23.3px;width:27.4px;height:12.8px;background:#535353"></div>
<div class="t" style="left:635.7px;top:28px;font-size:6.0px;color:#cfcfcf;letter-spacing:-0.072px;">Properties</div>
<div class="t" style="left:667.6px;top:26.6px;font-size:5.5px;color:#cfcfcf;">⁝</div>
<div class="t" style="left:672.9px;top:29px;font-size:5.8px;color:#f4f4f4;font-weight:bold;letter-spacing:-0.422px;">Pages</div>
<div class="t" style="left:698.7px;top:28px;font-size:6.0px;color:#cfcfcf;letter-spacing:-0.104px;">CC Librarie</div>
<svg style="left:740px;top:27px" width="6" height="5"><path d="M0 0.6 H5 M0 2.3 H5 M0 4 H5" stroke="#bdbdbd" stroke-width="0.9"/></svg>
<div class="t" style="left:631px;top:40px;font-size:5.4px;color:#e6e6e6;letter-spacing:0.118px;-webkit-text-stroke:0.2px #e6e6e6">[None]</div>
<div class="t" style="left:631px;top:54px;font-size:5.4px;color:#e6e6e6;letter-spacing:-0.083px;-webkit-text-stroke:0.2px #e6e6e6">A41-Gabarit A4 – Numéros de page noirs</div>
<div class="a" style="left:728.7px;top:37.3px;width:8.9px;height:11.1px;background:#ffffff"></div>
<div class="a" style="left:729px;top:51px;width:8.6px;height:11px;background:#ffffff"></div>
<div class="a" style="left:740.6px;top:36.5px;width:7.4px;height:27px;background:#4c4c4c"></div>
<div class="a" style="left:741px;top:36px;width:5.6px;height:12px;border-radius:2.5px;background:#646464"></div>
<div class="a" style="left:630px;top:63.3px;width:118px;height:1.8px;background:#414141"></div>
<div class="a" style="left:741px;top:65px;width:7px;height:341px;background:#4b4b4b"></div>
<div class="a" style="left:742px;top:65.7px;width:5.3px;height:215.7px;border-radius:2.6px;background:#606060"></div>
<svg style="left:0;top:0" width="748" height="420"><rect x="637.5" y="69.7" width="11.6" height="16.4" fill="#a6a6a6"/><rect x="637.5" y="69.7" width="2.6" height="16.4" fill="#e8e8e8"/><rect x="638.1" y="71.7" width="1.4" height="1.4" fill="#111"/><rect x="638.1" y="74.7" width="1.4" height="1.4" fill="#111"/><rect x="638.1" y="77.7" width="1.4" height="1.4" fill="#111"/><rect x="638.1" y="80.7" width="1.4" height="1.4" fill="#111"/><rect x="638.1" y="83.7" width="1.4" height="1.4" fill="#111"/><path d="M641.0 66.5 H645.5 L643.25 68.8 Z" fill="#e0e0e0"/><text x="643.3" y="93.9" font-size="5.2" fill="#e2e2e2" stroke="#e2e2e2" stroke-width="0.12" text-anchor="middle" font-family="Liberation Sans">1</text><rect x="637.5" y="100.2" width="11.6" height="16.4" fill="#ffffff"/><text x="637.9" y="104.10000000000001" font-size="4.3" font-weight="bold" font-family="Liberation Sans" fill="#111" textLength="10.799999999999999" lengthAdjust="spacingAndGlyphs">A42</text><rect x="638.0" y="105.2" width="10.6" height="10.899999999999999" fill="#6e7f8c"/><rect x="638.0" y="110.2" width="10.6" height="5.899999999999999" fill="#2c3238"/><rect x="640.5" y="106.2" width="5" height="3" fill="#c8d2d8"/><rect x="649.1" y="100.2" width="11.6" height="16.4" fill="#ffffff"/><text x="649.5" y="104.10000000000001" font-size="4.3" font-weight="bold" font-family="Liberation Sans" fill="#111" textLength="10.799999999999999" lengthAdjust="spacingAndGlyphs">A41</text><rect x="650.1" y="107.7" width="9.6" height="1.8" fill="#333"/><rect x="650.1" y="110.7" width="9.6" height="1.8" fill="#444"/><rect x="650.1" y="113.2" width="7.6" height="1" fill="#777"/><rect x="648.8000000000001" y="100.2" width="0.6" height="16.4" fill="#777"/><text x="649.1" y="124.4" font-size="5.2" fill="#e2e2e2" stroke="#e2e2e2" stroke-width="0.12" text-anchor="middle" font-family="Liberation Sans">2-3</text><rect x="637.5" y="129.6" width="11.6" height="16.4" fill="#ffffff"/><text x="637.9" y="133.5" font-size="4.3" font-weight="bold" font-family="Liberation Sans" fill="#111" textLength="10.799999999999999" lengthAdjust="spacingAndGlyphs">A41</text><rect x="638.5" y="134.6" width="4.3" height="10.399999999999999" fill="#b9a07a"/><rect x="643.8" y="134.6" width="4.3" height="10.399999999999999" fill="#8c8c7a"/><rect x="638.5" y="137.6" width="9.6" height="1.2" fill="#fff"/><rect x="649.1" y="129.6" width="11.6" height="16.4" fill="#ffffff"/><text x="649.5" y="133.5" font-size="4.3" font-weight="bold" font-family="Liberation Sans" fill="#111" textLength="10.799999999999999" lengthAdjust="spacingAndGlyphs">A42</text><rect x="650.1" y="134.6" width="9.6" height="11.399999999999999" fill="#cfcfcf"/><path d="M660.7 137.6 L657.7 140.6 L660.7 143.6 Z" fill="#111"/><rect x="657.7" y="143.0" width="3" height="3" fill="#111"/><rect x="648.8000000000001" y="129.6" width="0.6" height="16.4" fill="#777"/><text x="649.1" y="153.79999999999998" font-size="5.2" fill="#e2e2e2" stroke="#e2e2e2" stroke-width="0.12" text-anchor="middle" font-family="Liberation Sans">[4-5]</text><rect x="637.5" y="159.4" width="11.6" height="16.4" fill="#ffffff"/><text x="637.9" y="163.3" font-size="4.3" font-weight="bold" font-family="Liberation Sans" fill="#111" textLength="10.799999999999999" lengthAdjust="spacingAndGlyphs">A41</text><rect x="638.1" y="164.4" width="10.4" height="10.799999999999999" fill="#aaaaaa"/><rect x="649.1" y="159.4" width="11.6" height="16.4" fill="#ffffff"/><text x="649.5" y="163.3" font-size="4.3" font-weight="bold" font-family="Liberation Sans" fill="#111" textLength="10.799999999999999" lengthAdjust="spacingAndGlyphs">A41</text><rect x="650.1" y="165.4" width="9.6" height="2" fill="#555"/><rect x="650.1" y="168.9" width="9.6" height="2.5" fill="#222"/><rect x="650.1" y="172.4" width="9.6" height="2" fill="#444"/><rect x="648.8000000000001" y="159.4" width="0.6" height="16.4" fill="#777"/><text x="649.1" y="183.6" font-size="5.2" fill="#e2e2e2" stroke="#e2e2e2" stroke-width="0.12" text-anchor="middle" font-family="Liberation Sans">6-7</text><rect x="637.5" y="189.3" width="11.6" height="16.4" fill="#ffffff"/><text x="637.9" y="193.20000000000002" font-size="4.3" font-weight="bold" font-family="Liberation Sans" fill="#111" textLength="10.799999999999999" lengthAdjust="spacingAndGlyphs">A41</text><rect x="638.8" y="195.3" width="3.8" height="3.8" fill="none" stroke="#333" stroke-width="0.7"/><rect x="643.4" y="195.3" width="3.8" height="3.8" fill="none" stroke="#333" stroke-width="0.7"/><rect x="638.8" y="200.3" width="3.8" height="3.8" fill="none" stroke="#333" stroke-width="0.7"/><rect x="643.4" y="200.3" width="3.8" height="3.8" fill="none" stroke="#333" stroke-width="0.7"/><rect x="649.1" y="189.3" width="11.6" height="16.4" fill="#ffffff"/><text x="649.5" y="193.20000000000002" font-size="4.3" font-weight="bold" font-family="Liberation Sans" fill="#111" textLength="10.799999999999999" lengthAdjust="spacingAndGlyphs">A41</text><rect x="650.4" y="195.3" width="3.8" height="3.8" fill="none" stroke="#333" stroke-width="0.7"/><rect x="655.0" y="195.3" width="3.8" height="3.8" fill="none" stroke="#333" stroke-width="0.7"/><rect x="650.4" y="200.3" width="3.8" height="3.8" fill="none" stroke="#333" stroke-width="0.7"/><rect x="655.0" y="200.3" width="3.8" height="3.8" fill="none" stroke="#333" stroke-width="0.7"/><rect x="648.8000000000001" y="189.3" width="0.6" height="16.4" fill="#777"/><text x="649.1" y="213.5" font-size="5.2" fill="#e2e2e2" stroke="#e2e2e2" stroke-width="0.12" text-anchor="middle" font-family="Liberation Sans">8-9</text><rect x="637.5" y="219.0" width="11.6" height="16.4" fill="#ffffff"/><text x="637.9" y="222.9" font-size="4.3" font-weight="bold" font-family="Liberation Sans" fill="#111" textLength="10.799999999999999" lengthAdjust="spacingAndGlyphs">A42</text><rect x="638.5" y="224.0" width="3" height="6" fill="#555"/><rect x="638.0" y="229.5" width="5.5" height="5" fill="#111"/><rect x="644.0" y="224.0" width="4.6" height="11.399999999999999" fill="#cfcfcf"/><rect x="649.1" y="219.0" width="11.6" height="16.4" fill="#ffffff"/><text x="649.5" y="222.9" font-size="4.3" font-weight="bold" font-family="Liberation Sans" fill="#111" textLength="10.799999999999999" lengthAdjust="spacingAndGlyphs">A41</text><rect x="650.1" y="225.0" width="8.6" height="1.2" fill="#222"/><rect x="650.1" y="227.4" width="8.6" height="1.2" fill="#222"/><rect x="650.1" y="229.8" width="8.6" height="1.2" fill="#222"/><rect x="650.1" y="232.2" width="8.6" height="1.2" fill="#222"/><rect x="648.8000000000001" y="219.0" width="0.6" height="16.4" fill="#777"/><text x="649.1" y="243.2" font-size="5.2" fill="#e2e2e2" stroke="#e2e2e2" stroke-width="0.12" text-anchor="middle" font-family="Liberation Sans">10-11</text><rect x="637.5" y="248.8" width="11.6" height="16.4" fill="#bcd5f4"/><text x="637.9" y="252.70000000000002" font-size="4.3" font-weight="bold" font-family="Liberation Sans" fill="#111" textLength="10.799999999999999" lengthAdjust="spacingAndGlyphs">A41</text><rect x="638.5" y="254.8" width="9.6" height="1.2" fill="#4a6f99"/><rect x="638.5" y="257.8" width="9.6" height="1.2" fill="#4a6f99"/><rect x="638.5" y="260.8" width="9.6" height="1.2" fill="#4a6f99"/><rect x="643.3" y="253.8" width="1" height="10.399999999999999" fill="#2d5f99"/><rect x="649.1" y="248.8" width="11.6" height="16.4" fill="#bcd5f4"/><text x="649.5" y="252.70000000000002" font-size="4.3" font-weight="bold" font-family="Liberation Sans" fill="#111" textLength="10.799999999999999" lengthAdjust="spacingAndGlyphs">A41</text><rect x="650.1" y="254.8" width="9.6" height="1.2" fill="#4a6f99"/><rect x="650.1" y="257.8" width="9.6" height="1.2" fill="#4a6f99"/><rect x="650.1" y="260.8" width="9.6" height="1.2" fill="#4a6f99"/><rect x="654.9" y="253.8" width="1" height="10.399999999999999" fill="#2d5f99"/><rect x="648.8000000000001" y="248.8" width="0.6" height="16.4" fill="#777"/><rect x="640.5" y="267.40000000000003" width="17.2" height="6.7" fill="#2f76d6"/><text x="649.1" y="272.5" font-size="5" fill="#fff" text-anchor="middle" font-family="Liberation Sans">12-13</text><rect x="637.5" y="278.6" width="11.6" height="16.4" fill="#ffffff"/><text x="637.9" y="282.5" font-size="4.3" font-weight="bold" font-family="Liberation Sans" fill="#111" textLength="10.799999999999999" lengthAdjust="spacingAndGlyphs">A41</text><rect x="638.5" y="284.6" width="8.6" height="1.2" fill="#222"/><rect x="638.5" y="287.0" width="8.6" height="1.2" fill="#222"/><rect x="638.5" y="289.40000000000003" width="8.6" height="1.2" fill="#222"/><rect x="638.5" y="291.8" width="8.6" height="1.2" fill="#222"/><rect x="649.1" y="278.6" width="11.6" height="16.4" fill="#ffffff"/><text x="649.5" y="282.5" font-size="4.3" font-weight="bold" font-family="Liberation Sans" fill="#111" textLength="10.799999999999999" lengthAdjust="spacingAndGlyphs">A42</text><rect x="649.7" y="283.6" width="10.4" height="10.799999999999999" fill="#aaaaaa"/><rect x="648.8000000000001" y="278.6" width="0.6" height="16.4" fill="#777"/><text x="649.1" y="302.8" font-size="5.2" fill="#e2e2e2" stroke="#e2e2e2" stroke-width="0.12" text-anchor="middle" font-family="Liberation Sans">14-15</text><rect x="637.5" y="308.6" width="11.6" height="16.4" fill="#a9a9a9"/><rect x="646.6" y="308.6" width="1.5" height="16.4" fill="#f5f5f5"/><text x="643.3" y="332.8" font-size="5.2" fill="#e2e2e2" stroke="#e2e2e2" stroke-width="0.12" text-anchor="middle" font-family="Liberation Sans">16</text><rect x="637.5" y="338.4" width="11.6" height="16.4" fill="#a6a6a6"/><rect x="637.5" y="338.4" width="2.6" height="16.4" fill="#e8e8e8"/><rect x="638.1" y="340.4" width="1.4" height="1.4" fill="#111"/><rect x="638.1" y="343.4" width="1.4" height="1.4" fill="#111"/><rect x="638.1" y="346.4" width="1.4" height="1.4" fill="#111"/><rect x="638.1" y="349.4" width="1.4" height="1.4" fill="#111"/><rect x="638.1" y="352.4" width="1.4" height="1.4" fill="#111"/><path d="M641.0 335.2 H645.5 L643.25 337.5 Z" fill="#e0e0e0"/><text x="643.3" y="362.59999999999997" font-size="5.2" fill="#e2e2e2" stroke="#e2e2e2" stroke-width="0.12" text-anchor="middle" font-family="Liberation Sans">1</text><rect x="637.5" y="368.3" width="13.3" height="16.4" fill="#ffffff"/><text x="637.9" y="372.2" font-size="4.3" font-weight="bold" font-family="Liberation Sans" fill="#111" textLength="12.5" lengthAdjust="spacingAndGlyphs">LTR2</text><rect x="638.1" y="373.3" width="12.100000000000001" height="10.799999999999999" fill="#aaaaaa"/><rect x="650.8" y="368.3" width="13.3" height="16.4" fill="#ffffff"/><text x="651.1999999999999" y="372.2" font-size="4.3" font-weight="bold" font-family="Liberation Sans" fill="#111" textLength="12.5" lengthAdjust="spacingAndGlyphs">LTR1</text><rect x="651.8" y="373.3" width="11.3" height="2" fill="#eee"/><rect x="662.0999999999999" y="373.3" width="1.5" height="1.5" fill="#000"/><rect x="652.8" y="375.8" width="8.3" height="1.8" fill="#222"/><rect x="652.8" y="378.40000000000003" width="8.3" height="1.8" fill="#222"/><rect x="652.8" y="381.0" width="8.3" height="1.8" fill="#222"/><rect x="650.5" y="368.3" width="0.6" height="16.4" fill="#777"/><text x="650.8" y="392.5" font-size="5.2" fill="#e2e2e2" stroke="#e2e2e2" stroke-width="0.12" text-anchor="middle" font-family="Liberation Sans">2-3</text><rect x="637.5" y="397.9" width="13.3" height="16.4" fill="#ffffff"/><text x="637.9" y="401.79999999999995" font-size="4.3" font-weight="bold" font-family="Liberation Sans" fill="#111" textLength="12.5" lengthAdjust="spacingAndGlyphs">LTR1</text><rect x="638.5" y="403.9" width="11.3" height="2" fill="#555"/><rect x="638.5" y="407.4" width="11.3" height="2.5" fill="#222"/><rect x="638.5" y="410.9" width="11.3" height="2" fill="#444"/><rect x="650.8" y="397.9" width="13.3" height="16.4" fill="#ffffff"/><text x="651.1999999999999" y="401.79999999999995" font-size="4.3" font-weight="bold" font-family="Liberation Sans" fill="#111" textLength="12.5" lengthAdjust="spacingAndGlyphs">LTR2</text><rect x="651.8" y="402.9" width="11.3" height="2" fill="#eee"/><rect x="662.0999999999999" y="402.9" width="1.5" height="1.5" fill="#000"/><rect x="652.8" y="405.4" width="8.3" height="1.8" fill="#222"/><rect x="652.8" y="408.0" width="8.3" height="1.8" fill="#222"/><rect x="652.8" y="410.59999999999997" width="8.3" height="1.8" fill="#222"/><rect x="650.5" y="397.9" width="0.6" height="16.4" fill="#777"/><text x="650.8" y="422.09999999999997" font-size="5.2" fill="#e2e2e2" stroke="#e2e2e2" stroke-width="0.12" text-anchor="middle" font-family="Liberation Sans"></text></svg>
<div class="a" style="left:630px;top:406px;width:111px;height:14px;background:#535353"></div>
<div class="t" style="left:632.2px;top:413px;font-size:5.6px;color:#e6e6e6;letter-spacing:-0.333px;-webkit-text-stroke:0.2px #e6e6e6">32 Pages in 18 Spreads</div>
<svg style="left:700px;top:409px" width="42" height="10" viewBox="0 0 42 10">
<path d="M3 7.5 H10 A2 2 0 0 0 9.5 3.6 A3 3 0 0 0 4 3.8 A1.9 1.9 0 0 0 3 7.5 Z" fill="none" stroke="#c8c8c8" stroke-width="0.8"/>
<circle cx="11.5" cy="8" r="0.5" fill="#c8c8c8"/>
<rect x="18.3" y="2.3" width="5.5" height="6" fill="none" stroke="#c8c8c8" stroke-width="0.8"/><path d="M21 3.8 V6.8 M19.5 5.3 H22.5" stroke="#c8c8c8" stroke-width="0.6"/>
<path d="M30.5 3 H36.5 M32 3 V2 H35 V3 M31.2 3.3 L31.8 8.6 H35.2 L35.8 3.3" fill="none" stroke="#c8c8c8" stroke-width="0.8"/>
</svg>
<div class="a" style="left:34px;top:411.7px;width:569px;height:8.3px;background:#3c3c3c"></div>
<div class="a" style="left:42px;top:404px;width:561px;height:7.7px;background:#5a5a5a"></div>
<div class="t" style="left:40.7px;top:415px;font-size:5.4px;color:#dcdcdc;font-weight:bold;letter-spacing:-0.323px;">50.18%</div>
<svg style="left:60px;top:412px" width="545" height="8" viewBox="0 0 545 8">
<path d="M2 3 L3.5 4.5 L5 3" fill="none" stroke="#bbb" stroke-width="0.7"/>
<path d="M11.5 1.8 V6.2 M16 1.8 L13 4 L16 6.2 Z" fill="#bbb" stroke="#bbb" stroke-width="0.6"/>
<path d="M23.5 1.8 L20.5 4 L23.5 6.2 Z" fill="#bbb"/>
<path d="M76 1.8 L79 4 L76 6.2 Z" fill="#bbb"/>
<path d="M85 1.8 L88 4 L85 6.2 Z M89 1.8 V6.2" fill="#bbb" stroke="#bbb" stroke-width="0.6"/>
<path d="M99.2 6.6 A2.9 2.9 0 1 1 104.6 5.6" fill="none" stroke="#d0d0d0" stroke-width="1"/><circle cx="104.8" cy="6.8" r="0.6" fill="#d0d0d0"/>
<path d="M161 3 L162.5 4.5 L164 3" fill="none" stroke="#bbb" stroke-width="0.7"/>
<circle cx="173.5" cy="4" r="2.5" fill="#e0383e"/>
<path d="M209 3 L210.5 4.5 L212 3" fill="none" stroke="#bbb" stroke-width="0.7"/>
</svg>
<div class="a" style="left:90px;top:412.5px;width:32.5px;height:7.5px;background:#2c2c2c"></div>
<div class="t" style="left:92.2px;top:415px;font-size:5.4px;color:#e0e0e0;letter-spacing:-0.706px;-webkit-text-stroke:0.2px #e0e0e0">12</div>
<div class="a" style="left:122.5px;top:412.5px;width:8px;height:7.5px;background:#353535"></div>
<svg style="left:123px;top:413px" width="7" height="6"><path d="M2 2 L3.5 3.5 L5 2" fill="none" stroke="#bbb" stroke-width="0.7"/></svg>
<div class="t" style="left:172px;top:415px;font-size:5.4px;color:#dcdcdc;font-weight:bold;letter-spacing:-0.242px;">Adobe Templates...</div>
<div class="t" style="left:239px;top:415px;font-size:5.4px;color:#dcdcdc;font-weight:bold;letter-spacing:-0.264px;">36 errors</div>
<div class="a" style="left:346.7px;top:413.3px;width:167px;height:5.8px;border-radius:2.9px;background:#626262"></div>
<svg style="left:594px;top:413px" width="8" height="6"><rect x="0.5" y="0.5" width="6.5" height="5" fill="none" stroke="#bbb" stroke-width="0.7"/><path d="M3.75 0.5 V5.5" stroke="#bbb" stroke-width="0.7"/></svg>
</div></body></html>
